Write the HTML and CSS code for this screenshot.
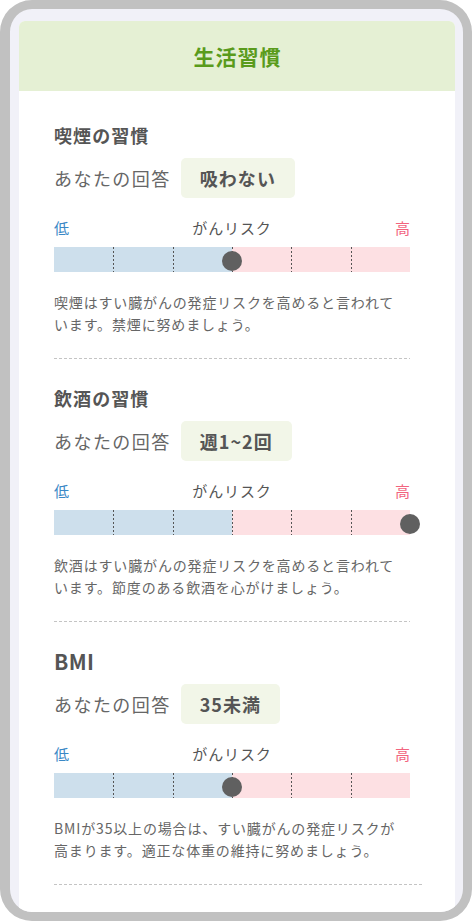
FILE: index.html
```html
<!DOCTYPE html>
<html lang="ja">
<head>
<meta charset="utf-8">
<title>生活習慣</title>
<link rel="stylesheet" href="styles.css">
</head>
<body>
<div class="frame">
  <div class="card">
    <div class="card-header"><h1 class="card-title">生活習慣</h1></div>
    <div class="card-body">
      <section class="habit habit-first">
        <h2 class="habit-title">喫煙の習慣</h2>
        <div class="answer"><span class="answer-label">あなたの回答</span><span class="answer-value">吸わない</span></div>
        <div class="risk-labels"><span class="low">低</span><span class="mid">がんリスク</span><span class="high">高</span></div>
        <div class="risk-bar">
          <span class="seg"></span><span class="seg"></span><span class="seg"></span><span class="seg"></span><span class="seg"></span><span class="seg"></span>
          <span class="marker" style="left:50%"></span>
        </div>
        <p class="desc">喫煙はすい臓がんの発症リスクを高めると言われています。禁煙に努めましょう。</p>
      </section>
      <div class="sep"></div>
      <section class="habit">
        <h2 class="habit-title">飲酒の習慣</h2>
        <div class="answer"><span class="answer-label">あなたの回答</span><span class="answer-value">週1~2回</span></div>
        <div class="risk-labels"><span class="low">低</span><span class="mid">がんリスク</span><span class="high">高</span></div>
        <div class="risk-bar">
          <span class="seg"></span><span class="seg"></span><span class="seg"></span><span class="seg"></span><span class="seg"></span><span class="seg"></span>
          <span class="marker" style="left:100%"></span>
        </div>
        <p class="desc">飲酒はすい臓がんの発症リスクを高めると言われています。節度のある飲酒を心がけましょう。</p>
      </section>
      <div class="sep"></div>
      <section class="habit">
        <h2 class="habit-title habit-title-latin">BMI</h2>
        <div class="answer"><span class="answer-label">あなたの回答</span><span class="answer-value">35未満</span></div>
        <div class="risk-labels"><span class="low">低</span><span class="mid">がんリスク</span><span class="high">高</span></div>
        <div class="risk-bar">
          <span class="seg"></span><span class="seg"></span><span class="seg"></span><span class="seg"></span><span class="seg"></span><span class="seg"></span>
          <span class="marker" style="left:50%"></span>
        </div>
        <p class="desc">BMIが35以上の場合は、すい臓がんの発症リスクが高まります。適正な体重の維持に努めましょう。</p>
      </section>
      <div class="sep sep-last"></div>
    </div>
  </div>
</div>
</body>
</html>
```
FILE: styles.css
```css
* { box-sizing: border-box; }
html, body { margin: 0; padding: 0; background: #ffffff; }
body {
  font-family: "Noto Sans CJK JP", "Noto Sans", sans-serif;
  color: #555;
}
.frame {
  width: 472px;
  height: 921px;
  border-style: solid;
  border-color: #c1c1c1;
  border-width: 9px 9px 9px 10px;
  border-radius: 32px;
  background: #f1f1f8;
  padding: 12px 8px 0 9px;
  overflow: hidden;
}
.card {
  background: #ffffff;
  border-radius: 6px 6px 0 0;
  height: 100%;
  overflow: hidden;
}
.card-header {
  height: 70px;
  background: #e5f0d4;
  display: flex;
  align-items: center;
  justify-content: center;
}
.card-title {
  margin: 0;
  font-size: 21px;
  font-weight: 700;
  color: #5a9b1c;
  letter-spacing: 0.05em;
  line-height: 28px;
  padding-left: 0.05em;
}
.card-body {
  padding: 0 45px 0 35px;
}
.habit { padding-top: 26px; }
.habit-first { padding-top: 31px; }
.habit-title {
  margin: 0;
  font-size: 18px;
  font-weight: 700;
  line-height: 26px;
  color: #555;
  letter-spacing: 0.06em;
}
.habit-title-latin { font-size: 21px; letter-spacing: 0.02em; }
.answer {
  margin-top: 10px;
  display: flex;
  align-items: center;
  gap: 10px;
  height: 40px;
}
.answer-label {
  font-size: 18px;
  line-height: 24px;
  color: #666;
  letter-spacing: 0.08em;
}
.answer-value {
  height: 40px;
  line-height: 40px;
  padding: 0 19px;
  background: #f2f6e8;
  border-radius: 5px;
  font-size: 18px;
  font-weight: 700;
  color: #555;
  letter-spacing: 0.06em;
}
.risk-labels {
  margin-top: 19px;
  display: grid;
  grid-template-columns: 1fr auto 1fr;
  font-size: 15px;
  line-height: 22px;
  letter-spacing: 0.06em;
}
.low { color: #3a88c6; }
.mid { color: #555; text-align: center; }
.high { color: #f2647e; text-align: right; letter-spacing: 0; }
.risk-bar {
  position: relative;
  margin-top: 8px;
  height: 25px;
  display: grid;
  grid-template-columns: repeat(6, 1fr);
  background: linear-gradient(to right, #cddfec 0 50%, #fde0e3 50% 100%);
}
.seg + .seg {
  background: repeating-linear-gradient(to bottom, #555 0 2px, transparent 2px 4px) left top / 1px 100% no-repeat;
}
.marker {
  position: absolute;
  top: 50%;
  width: 20px;
  height: 20px;
  margin: -9px 0 0 -10px;
  border-radius: 50%;
  background: #606060;
}
.desc {
  margin: 19px 0 0;
  max-width: 346px;
  font-size: 14px;
  line-height: 22px;
  color: #666;
  letter-spacing: 0.06em;
  padding-bottom: 23px;
}
.sep {
  height: 1px;
  background: repeating-linear-gradient(to right, #c4c4c4 0 3px, transparent 3px 5px);
}
.sep-last { width: 368px; }
```
